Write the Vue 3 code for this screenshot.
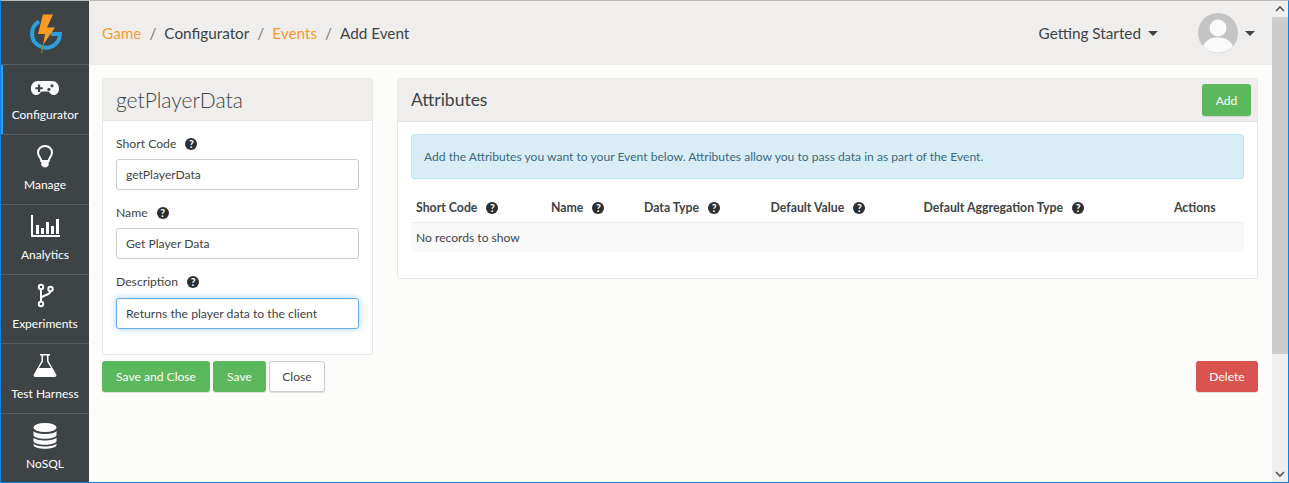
<script setup>
const navItems = [
  { label: 'Configurator', icon: 'game', active: true },
  { label: 'Manage', icon: 'bulb' },
  { label: 'Analytics', icon: 'chart' },
  { label: 'Experiments', icon: 'branch' },
  { label: 'Test Harness', icon: 'flask' },
  { label: 'NoSQL', icon: 'db' },
]

const fields = [
  { label: 'Short Code', value: 'getPlayerData' },
  { label: 'Name', value: 'Get Player Data' },
  { label: 'Description', value: 'Returns the player data to the client', focus: true },
]

const columns = [
  { label: 'Short Code', width: 135 },
  { label: 'Name', width: 93 },
  { label: 'Data Type', width: 126.5 },
  { label: 'Default Value', width: 153 },
  { label: 'Default Aggregation Type', width: 250.5 },
  { label: 'Actions', plain: true },
]
</script>

<template>
  <div class="window">
    <aside class="sidebar">
      <div class="logo">
        <svg width="36" height="42" viewBox="0 0 36 42">
          <path d="M12 9.500A14 14 0 1 0 33 22H24" fill="none" stroke="#2d9fdc" stroke-width="4" />
          <path d="M16 2.500h10l-6 13h8L16 33l2-11h-7z" fill="#f79b25" />
          <path d="M16 33l-1.500 8" stroke="#a8803f" stroke-width="1" />
        </svg>
      </div>
      <a v-for="item in navItems" :key="item.label" :class="['nav-item', { active: item.active }]">
        <svg class="nav-icon" width="34" height="28" viewBox="0 0 34 28" fill="#fff">
          <g v-if="item.icon === 'game'" transform="translate(2.100 5.500) scale(.875)">
            <path d="M9 4h16c5 0 8 4 8 8.500S30.500 20 27 20c-3 0-4.500-2.500-6-4h-8c-1.500 1.500-3 4-6 4-3.500 0-6-3-6-7.500S4 4 9 4z" />
            <path d="M9 8h2.500v3H14.500v2.500H11.500v3H9v-3H6V11h3z" fill="#3e4446" />
            <circle cx="25" cy="9.500" r="1.800" fill="#3e4446" />
            <circle cx="21.500" cy="13.500" r="1.800" fill="#3e4446" />
          </g>
          <template v-else-if="item.icon === 'bulb'">
            <path d="M17 4c-4.200 0-7 3-7 6.500 0 3.800 3.300 5.500 3.300 8.500h7.400c0-3 3.300-4.700 3.300-8.500C24 7 21.200 4 17 4z" fill="none" stroke="#fff" stroke-width="2" />
            <path d="M13.300 19.500h7.400v3.500c0 1-1.400 1-1.400 1.500 0 1.200-4.600 1.200-4.600 0 0-.5-1.400-.5-1.400-1.500z" />
          </template>
          <template v-else-if="item.icon === 'chart'">
            <path d="M3 3h2v20h27v2H3z" />
            <path d="M8 13h3v9H8zM13 16h3v6h-3zM18 10h3v12h-3zM23 14h3v8h-3zM28 7h3v15h-3z" />
          </template>
          <g v-else-if="item.icon === 'branch'" fill="none" stroke="#fff" stroke-width="2">
            <circle cx="13" cy="5" r="2.200" />
            <circle cx="13" cy="22" r="2.200" />
            <circle cx="22.500" cy="7" r="2.200" />
            <path d="M13 7.200v12.600M13.500 16c1-3.500 8.500-2 9-6.800" />
          </g>
          <template v-else-if="item.icon === 'flask'">
            <path d="M12 3h10v1.500h-1.500V10L28.200 23.500c.6 1.300-.2 2.500-1.500 2.500H7.300c-1.300 0-2.100-1.200-1.500-2.500L13.500 10V4.500H12z" />
            <path d="M15 4.500h4v6L23 17H11l4-6.500z" fill="#3e4446" />
          </template>
          <template v-else>
            <ellipse cx="17" cy="6.500" rx="11.500" ry="4.500" />
            <path d="M5.500 10c2 4 21 4 23 0v4c-1 5-22 5-23 0zM5.500 16.500c2 4 21 4 23 0v3.500c-1 5-22 5-23 0zM5.500 22.500c2 4 21 4 23 0v1.500c-1 5-22 5-23 0z" />
          </template>
        </svg>
        <span>{{ item.label }}</span>
      </a>
    </aside>

    <div class="main">
      <header class="topbar">
        <nav class="crumbs">
          <a class="link">Game</a><i>/</i>
          <span>Configurator</span><i>/</i>
          <a class="link">Events</a><i>/</i>
          <span>Add Event</span>
        </nav>
        <div class="top-right">
          <span class="getting">Getting Started</span>
          <b class="caret"></b>
          <span class="avatar">
            <svg width="40" height="40" viewBox="0 0 40 40">
              <circle cx="20" cy="20" r="20" fill="#c4c4c4" />
              <circle cx="20" cy="15" r="8.500" fill="#fafafa" />
              <path d="M5 33c3-6 8-8.500 15-8.500S32 27 35 33a20 20 0 0 1-30 0z" fill="#fafafa" />
            </svg>
          </span>
          <b class="caret"></b>
        </div>
      </header>

      <div class="content">
        <div class="left-col">
          <section class="panel form-panel">
            <h2 class="panel-head title">getPlayerData</h2>
            <div class="form-body">
              <div v-for="field in fields" :key="field.label" class="field">
                <label>{{ field.label }} <span class="help">?</span></label>
                <input :class="{ focus: field.focus }" :value="field.value" readonly />
              </div>
            </div>
          </section>
          <div class="buttons">
            <button class="btn green wide">Save and Close</button>
            <button class="btn green save">Save</button>
            <button class="btn plain">Close</button>
          </div>
        </div>

        <div class="right-col">
          <section class="panel attr-panel">
            <div class="panel-head attr-head">
              <h3>Attributes</h3>
              <button class="btn green add">Add</button>
            </div>
            <div class="attr-body">
              <div class="notice">Add the Attributes you want to your Event below. Attributes allow you to pass data in as part of the Event.</div>
              <div class="thead">
                <div v-for="col in columns" :key="col.label" class="th" :style="col.width ? { width: col.width + 'px' } : null">
                  {{ col.label }} <span v-if="!col.plain" class="help">?</span>
                </div>
              </div>
              <div class="empty">No records to show</div>
            </div>
          </section>
          <div class="delete-row">
            <button class="btn red">Delete</button>
          </div>
        </div>
      </div>
    </div>

    <div class="scrollbar">
      <svg class="arrow" width="16" height="16" viewBox="0 0 16 16"><path d="M4 10l4-4 4 4" fill="none" stroke="#555" stroke-width="1.600" /></svg>
      <div class="thumb"></div>
      <div class="track"></div>
      <svg class="arrow" width="16" height="16" viewBox="0 0 16 16"><path d="M4 6l4 4 4-4" fill="none" stroke="#555" stroke-width="1.600" /></svg>
    </div>
  </div>
</template>

<style>
html, body {
  margin: 0;
  overflow: hidden;
}
</style>

<style scoped>
.window {
  box-sizing: border-box;
  width: 1289px;
  height: 483px;
  display: flex;
  overflow: hidden;
  background: #fcfcfb;
  border: 1px solid #0f80dc;
  border-top-color: #b9b9b9;
  font-family: Lato, "Open Sans", sans-serif;
  font-size: 12.1px;
  color: #3e4446;
}

.sidebar {
  width: 88px;
  flex: none;
  background: #3e4446;
  color: #fff;
}

.logo {
  height: 63px;
  display: flex;
  align-items: center;
  justify-content: center;
}

.nav-item {
  box-sizing: border-box;
  height: 70px;
  display: flex;
  flex-direction: column;
  align-items: center;
  border-top: 1px solid #5a6062;
  font-size: 12px;
  padding-top: 7px;
  gap: 7px;
}

.nav-item:nth-child(5) {
  height: 69px;
  gap: 6px;
}

.nav-item.active {
  box-shadow: inset 2px 0 0 #2d9fea;
}

.nav-icon {
  display: block;
}

.main {
  flex: 1;
  min-width: 0;
  display: flex;
  flex-direction: column;
}

.topbar {
  height: 64px;
  flex: none;
  box-sizing: border-box;
  padding: 0 17px 0 13px;
  background: #efeeed;
  display: flex;
  align-items: center;
  justify-content: space-between;
  font-size: 15.300px;
}

.crumbs i {
  font-style: normal;
  color: #777;
  margin: 0 8px;
}

.link {
  color: #f79b2e;
}

.top-right {
  display: flex;
  align-items: center;
}

.caret {
  width: 0;
  height: 0;
  border: 5px solid transparent;
  border-top-color: #3e4446;
  border-bottom: 0;
}

.getting {
  margin-right: 7px;
}

.avatar {
  margin: 0 7px 0 40px;
  height: 40px;
}

.content {
  flex: 1;
  display: flex;
  padding: 13px 14px 0 13px;
  gap: 24px;
}

.left-col {
  width: 271px;
  flex: none;
}

.right-col {
  flex: 1;
  min-width: 0;
}

.panel {
  box-sizing: border-box;
  background: #fff;
  border: 1px solid #e7e7e7;
  border-radius: 3px;
}

.panel-head {
  background: #efeeed;
  border-bottom: 1px solid #e4e4e4;
  margin: 0;
}

.title {
  height: 42px;
  box-sizing: border-box;
  font-size: 21px;
  font-weight: 300;
  line-height: 41px;
  padding-left: 13px;
}

.form-panel {
  height: 277px;
}

.form-body {
  padding: 14px 13px 0;
}

.field {
  height: 69px;
}

.field label {
  display: block;
  height: 24px;
  line-height: 17px;
  font-size: 12.200px;
}

.field:nth-child(3) label {
  height: 25px;
}

.field input {
  box-sizing: border-box;
  display: block;
  width: 243px;
  height: 31px;
  padding: 0 9px;
  border: 1px solid #ccc;
  border-radius: 3px;
  outline: none;
  font: inherit;
  color: #3e4446;
  background: #fff;
}

.field input.focus {
  border-color: #66afe9;
  box-shadow: 0 0 6px rgba(102, 175, 233, 0.6);
  font-size: 12.200px;
}

.help {
  display: inline-block;
  width: 12px;
  height: 12px;
  margin-left: 6px;
  border-radius: 50%;
  background: #2b2f31;
  color: #fff;
  font-size: 10.500px;
  font-weight: 700;
  line-height: 12px;
  text-align: center;
  vertical-align: 0;
}

.buttons {
  display: flex;
  gap: 3px;
  margin-top: 6px;
}

.btn {
  box-sizing: border-box;
  height: 31px;
  padding: 0;
  border: 1px solid transparent;
  border-radius: 3px;
  box-shadow: 0 1px 1px rgba(0, 0, 0, 0.12);
  font: inherit;
}

.green {
  background: #5cb85c;
  color: #fff;
}

.wide {
  width: 108px;
}

.save {
  width: 53px;
}

.plain {
  width: 56px;
  background: #fff;
  border-color: #ccc;
  color: #3e4446;
}

.red {
  background: #d9534f;
  color: #fff;
  width: 62px;
}

.attr-panel {
  height: 201px;
}

.attr-head {
  height: 43px;
  box-sizing: border-box;
  display: flex;
  align-items: center;
  justify-content: space-between;
  padding: 0 6px 0 13px;
}

.attr-head h3 {
  margin: 0 0 2px;
  font-size: 17.500px;
  font-weight: 400;
}

.add {
  width: 49px;
  height: 32px;
}

.attr-body {
  padding: 12px 13px 0;
}

.notice {
  box-sizing: border-box;
  height: 45px;
  line-height: 43px;
  padding-left: 12px;
  background: #d9edf7;
  border: 1px solid #bce8f1;
  border-radius: 3px;
  color: #3a6a80;
  font-size: 12.100px;
}

.thead {
  display: flex;
  height: 44px;
  align-items: center;
  padding: 14px 0 0 5px;
  box-sizing: border-box;
  border-bottom: 1px solid #eee;
}

.th {
  font-size: 12.300px;
  font-weight: 700;
  white-space: nowrap;
}

.empty {
  height: 29px;
  line-height: 30px;
  padding-left: 5px;
  background: #f9f9f9;
}

.delete-row {
  display: flex;
  justify-content: flex-end;
  margin-top: 82px;
}

.scrollbar {
  width: 16px;
  flex: none;
  display: flex;
  flex-direction: column;
  background: #efefef;
}

.arrow {
  flex: none;
}

.thumb {
  height: 337px;
  flex: none;
  background: #cdcdcd;
}

.track {
  flex: 1;
}
</style>
